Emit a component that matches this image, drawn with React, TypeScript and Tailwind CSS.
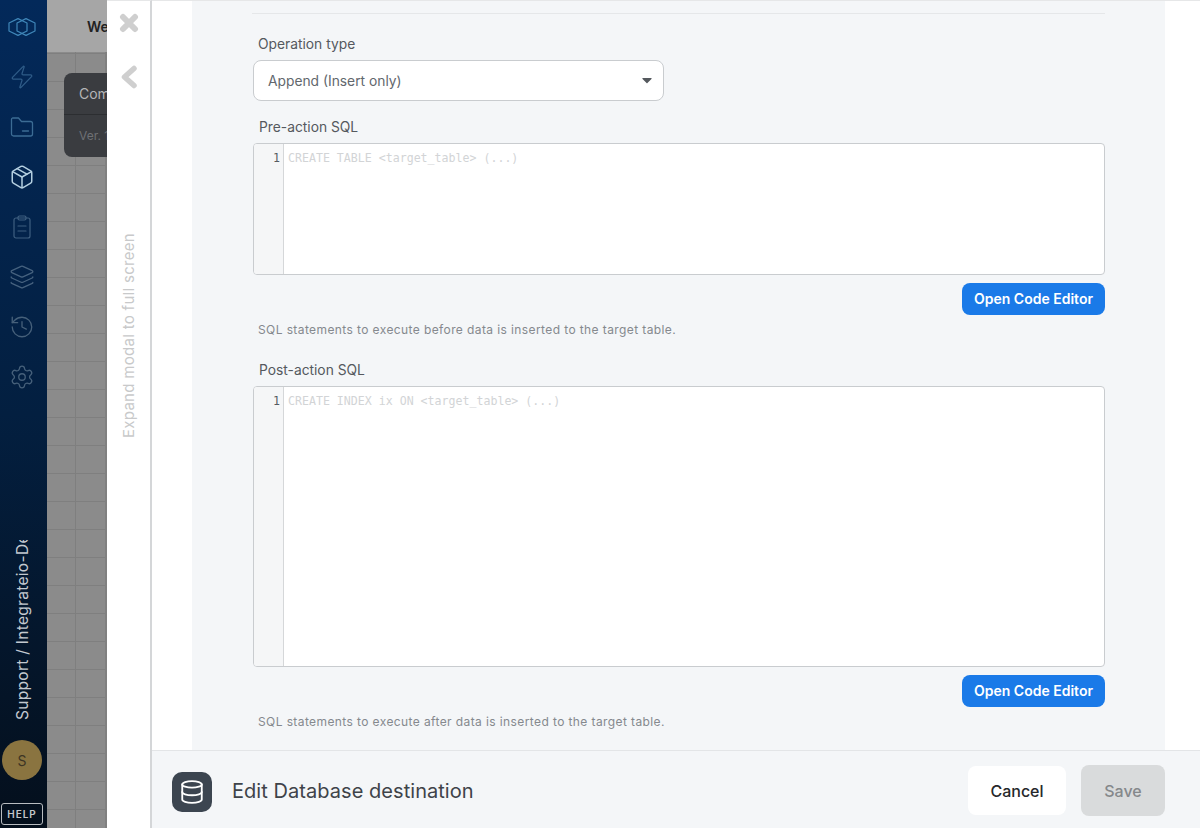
import { Database, History, Layers, Package, Settings, Zap } from "lucide-react";
import { FaCaretDown } from "react-icons/fa";

const LogoIcon = () => (
  <svg width="28" height="18" viewBox="0 0 28 18" fill="none" stroke="#3f86b8" strokeWidth="1.2" strokeLinejoin="round">
    <polygon points="10,0.6 19,5 19,13 10,17.4 1,13 1,5" />
    <polygon points="18,0.6 27,5 27,13 18,17.4 9,13 9,5" />
  </svg>
);

const FolderIcon = () => (
  <svg width="24" height="26" viewBox="0 0 24 26" fill="none" stroke="#3c6c94" strokeWidth="1.3" strokeLinejoin="round" strokeLinecap="round">
    <path d="M2.5 4h6l3 3.5h9a2 2 0 0 1 2 2V20a2 2 0 0 1-2 2h-17a2 2 0 0 1-2-2V5.5A1.5 1.5 0 0 1 2.5 4z" />
    <path d="M12.5 17h6" />
  </svg>
);

const ClipboardIcon = () => (
  <svg width="26" height="26" viewBox="0 0 26 26" fill="none" stroke="#3f5f80" strokeWidth="1.2" strokeLinejoin="round" strokeLinecap="round">
    <rect x="5" y="4" width="16" height="20" rx="2" />
    <rect x="9" y="2" width="8" height="4" rx="1.5" />
    <path d="M9 12h8M9 17h8" />
  </svg>
);

const CloseIcon = () => (
  <svg width="20" height="20" viewBox="0 0 20 20" fill="none" stroke="#cfcfcf" strokeWidth="6" strokeLinecap="round">
    <path d="M4 4l12 12M16 4L4 16" />
  </svg>
);

const BackIcon = () => (
  <svg width="18" height="24" viewBox="0 0 18 24" fill="none" stroke="#cfcfcf" strokeWidth="5.5" strokeLinecap="round" strokeLinejoin="round">
    <path d="M14 3.5L4.5 12l9.5 8.5" />
  </svg>
);

const CodeEditor = ({ height, placeholder }: { height: string; placeholder: string }) => (
  <div className={`flex ${height} bg-white border border-[#c9cccf] rounded-[4px] overflow-hidden`}>
    <div className="w-[30px] shrink-0 bg-[#f5f6f7] border-r border-[#d5d7d9] pt-[7px] pr-[3px] text-right font-['DejaVu_Sans_Mono',monospace] text-[11.6px] leading-[15px] text-[#555b61]">
      1
    </div>
    <div className="pl-[4px] pt-[7px] font-['DejaVu_Sans_Mono',monospace] text-[11.6px] leading-[15px] text-[#d2d4d6] whitespace-nowrap">
      {placeholder}
    </div>
  </div>
);

const SqlField = ({
  label,
  height,
  placeholder,
  help,
}: {
  label: string;
  height: string;
  placeholder: string;
  help: string;
}) => (
  <div>
    <label className="block pl-[6px] mb-[7px] text-[13.8px] leading-[17px] text-[#55595e]">{label}</label>
    <CodeEditor height={height} placeholder={placeholder} />
    <div className="flex justify-end mt-[8px]">
      <button className="h-[32px] w-[143px] pb-[1px] rounded-[8px] bg-[#1a7ae8] text-white text-[14px] font-semibold">
        Open Code Editor
      </button>
    </div>
    <p className="pl-[5px] mt-[7px] text-[12px] leading-[15px] tracking-[0.4px] text-[#85898e]">{help}</p>
  </div>
);

const App = () => {
  return (
    <div className="flex h-[828px] w-[1200px] overflow-hidden font-['Inter',sans-serif]">
      {/* left nav */}
      <aside className="w-[47px] shrink-0 flex flex-col items-center pr-[3px] bg-gradient-to-b from-[#03295a] via-[#031f40] to-[#040f1c]">
        <div className="mt-[18px] h-[18px]">
          <LogoIcon />
        </div>
        <div className="mt-[28px] flex flex-col items-center gap-[24px]">
          <Zap size={26} strokeWidth={1.2} className="text-[#2f5c88]" />
          <FolderIcon />
          <Package size={26} strokeWidth={1.4} className="text-[#b4cfe0]" />
          <ClipboardIcon />
          <Layers size={26} strokeWidth={1.2} className="text-[#46627f]" />
          <History size={26} strokeWidth={1.2} className="text-[#46607a]" />
          <Settings size={26} strokeWidth={1.2} className="text-[#46607a]" />
        </div>
        <div className="mt-auto h-[180px] w-full flex justify-center items-start overflow-hidden">
          <span className="ml-[1px] h-[180px] text-right whitespace-nowrap rotate-180 [writing-mode:vertical-rl] text-[15.5px] leading-[18px] tracking-[0.3px] text-[#c3c9d0]">
            Support / Integrateio-Dev
          </span>
        </div>
        <div className="mt-[20px] w-[40px] h-[40px] rounded-full bg-[#8a7440] flex items-center justify-center text-[14px] text-[#3d3424]">
          S
        </div>
        <div className="mt-[23px] mb-[3px] w-[42px] h-[22px] rounded-[3px] border border-[#b8bcc0] flex items-center justify-center text-[10px] font-semibold tracking-[1px] text-[#c3c7cb]">
          HELP
        </div>
      </aside>

      {/* dimmed canvas behind modal */}
      <div className="w-[60px] shrink-0 flex flex-col overflow-hidden bg-[#8b8b8b] bg-[linear-gradient(#7f7f7f_1px,transparent_1px),linear-gradient(90deg,#7f7f7f_1px,transparent_1px)] bg-[size:100%_28px,56px_100%] bg-[position:0_25px,28px_0] shadow-[inset_-2px_0_0_#808080]">
        <div className="h-[52px] shrink-0 w-full bg-[#a6a6a6] flex items-center pl-[40px] text-[14px] font-semibold text-[#222] whitespace-nowrap">
          Web
        </div>
        <div className="mt-[21px] ml-[17px] w-[120px] h-[84px] shrink-0 rounded-[8px] bg-[#3a3c40]">
          <div className="h-[42px] flex items-center pl-[15px] border-b border-[#2c2e31] text-[14px] text-[#b4b5b7]">Comp</div>
          <div className="h-[42px] flex items-center pl-[15px] text-[12px] text-[#6e7074]">Ver. 1</div>
        </div>
      </div>

      {/* modal side strip */}
      <div className="w-[45px] shrink-0 flex flex-col items-center bg-white border-t border-[#e6e7e8] border-r-2 border-r-[#d4d6d8]">
        <div className="mt-[12px]">
          <CloseIcon />
        </div>
        <div className="mt-[32px]">
          <BackIcon />
        </div>
        <span className="mt-[144px] whitespace-nowrap rotate-180 [writing-mode:vertical-rl] text-[15px] leading-[18px] tracking-[0.3px] text-[#c8c9ca]">
          Expand modal to full screen
        </span>
      </div>

      {/* modal body */}
      <div className="flex-1 flex flex-col min-w-0 bg-white border-t border-[#e6e7e8]">
        <main className="flex-1 min-h-0 overflow-hidden ml-[40px] mr-[35px] bg-[#f4f6f8] pl-[60px] pr-[60px] pt-[12px]">
          <div className="border-t border-[#e5e7e9] pt-[22px]">
            <label className="block pl-[6px] mb-[7px] text-[13.8px] leading-[17px] text-[#55595e]">Operation type</label>
            <div className="ml-[1px] w-[411px] h-[41px] flex items-center justify-between pl-[14px] pr-[8px] pt-[1px] bg-white border border-[#c9cccf] rounded-[8px] text-[13.8px] text-[#62676d]">
              <span>Append (Insert only)</span>
              <FaCaretDown size={16} className="text-[#55595e] -mt-[3px]" />
            </div>
            <div className="mt-[18px] ml-[1px] flex flex-col gap-[25px]">
              <SqlField
                label="Pre-action SQL"
                height="h-[132px]"
                placeholder="CREATE TABLE <target_table> (...)"
                help="SQL statements to execute before data is inserted to the target table."
              />
              <SqlField
                label="Post-action SQL"
                height="h-[281px]"
                placeholder="CREATE INDEX ix ON <target_table> (...)"
                help="SQL statements to execute after data is inserted to the target table."
              />
            </div>
          </div>
        </main>

        <footer className="h-[78px] shrink-0 flex items-center pt-[2px] pl-[20px] pr-[35px] bg-[#f4f6f8] border-t border-[#e3e5e7]">
          <div className="mt-[2px] w-[40px] h-[40px] rounded-[10px] bg-[#3c4550] flex items-center justify-center">
            <Database size={26} strokeWidth={1.7} className="text-white" />
          </div>
          <h2 className="ml-[20px] text-[20px] tracking-[0.05px] text-[#3e4349]">Edit Database destination</h2>
          <button className="ml-auto w-[98px] h-[49px] rounded-[8px] bg-white text-[16px] font-medium text-[#26282b]">
            Cancel
          </button>
          <button className="ml-[15px] w-[84px] h-[51px] rounded-[8px] bg-[#d9dbdc] text-[16px] font-medium text-[#85888b]">
            Save
          </button>
        </footer>
      </div>
    </div>
  );
};

export default App;
